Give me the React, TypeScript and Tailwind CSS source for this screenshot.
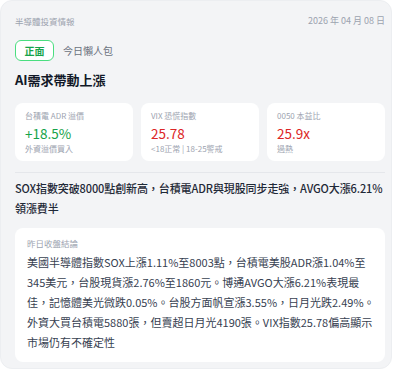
export default function App() {
  const stats = [
    { label: '台積電 ADR 溢價', value: '+18.5%', sub: '外資溢價買入', color: 'text-[#16a34a]' },
    { label: 'VIX 恐慌指數', value: '25.78', sub: '<18正常 | 18-25警戒', color: 'text-[#dc2626]' },
    { label: '0050 本益比', value: '25.9x', sub: '過熱', color: 'text-[#dc2626]' },
  ];

  // line breaks as in the original card
  const summary = [
    '美國半導體指數SOX上漲1.11%至8003點，台積電美股ADR漲1.04%至',
    '345美元，台股現貨漲2.76%至1860元。博通AVGO大漲6.21%表現最',
    '佳，記憶體美光微跌0.05%。台股方面帆宣漲3.55%，日月光跌2.49%。',
    '外資大買台積電5880張，但賣超日月光4190張。VIX指數25.78偏高顯示',
    '市場仍有不確定性',
  ];

  return (
    <div lang="zh-Hant" className="w-[400px] h-[375px] bg-white font-['Noto_Sans_CJK_TC',sans-serif]">
      <div className="w-[392px] h-[369px] rounded-xl bg-[#f3f4f6] border border-[#eceef1] pl-[14px] pr-[6px] pt-[13px]">
        {/* header */}
        <div className="flex items-center justify-between h-[14px]">
          <span className="text-[8.5px] text-[#9ca3af]">半導體投資情報</span>
          <span className="text-[9px] text-[#9ca3af]">2026 年 04 月 08 日</span>
        </div>

        <div className="flex items-center gap-[9px] mt-[12px]">
          <span className="h-[21px] w-[39px] flex items-center justify-center rounded-md border border-[#4ade80] text-[10px] font-semibold text-[#16a34a] bg-white">
            正面
          </span>
          <span className="text-[10px] text-[#6b7280]">今日懶人包</span>
        </div>

        <h1 className="mt-[9px] text-[13px] font-bold text-[#111827] leading-[20px]">AI需求帶動上漲</h1>

        {/* stats */}
        <div className="grid grid-cols-3 gap-[8px] mt-[13px]">
          {stats.map((s) => (
            <div key={s.label} className="h-[58px] rounded-lg bg-white px-[10px] pt-[7px]">
              <div className="text-[8px] text-[#9ca3af] leading-[12px]">{s.label}</div>
              <div className={`text-[13.5px] leading-[20px] mt-[1px] ${s.color}`}>{s.value}</div>
              <div className="text-[8px] text-[#9ca3af] leading-[12px]">{s.sub}</div>
            </div>
          ))}
        </div>

        <div className="mt-[11px] border-t border-[#e5e7eb]" />

        <p className="mt-[5px] text-[11px] font-medium text-[#1f2937] leading-[20px] whitespace-nowrap tracking-[-0.1px]">
          SOX指數突破8000點創新高，台積電ADR與現股同步走強，AVGO大漲6.21%
          <br />
          領漲費半
        </p>

        <div className="mt-[10px] rounded-lg bg-white px-[12px] pt-[8px] h-[134px]">
          <div className="text-[8.5px] text-[#9ca3af] leading-[14px]">昨日收盤結論</div>
          <div className="mt-[2px] text-[11px] text-[#374151] leading-[20px] whitespace-nowrap">
            {summary.map((line) => (
              <div key={line}>{line}</div>
            ))}
          </div>
        </div>
      </div>
    </div>
  );
}
